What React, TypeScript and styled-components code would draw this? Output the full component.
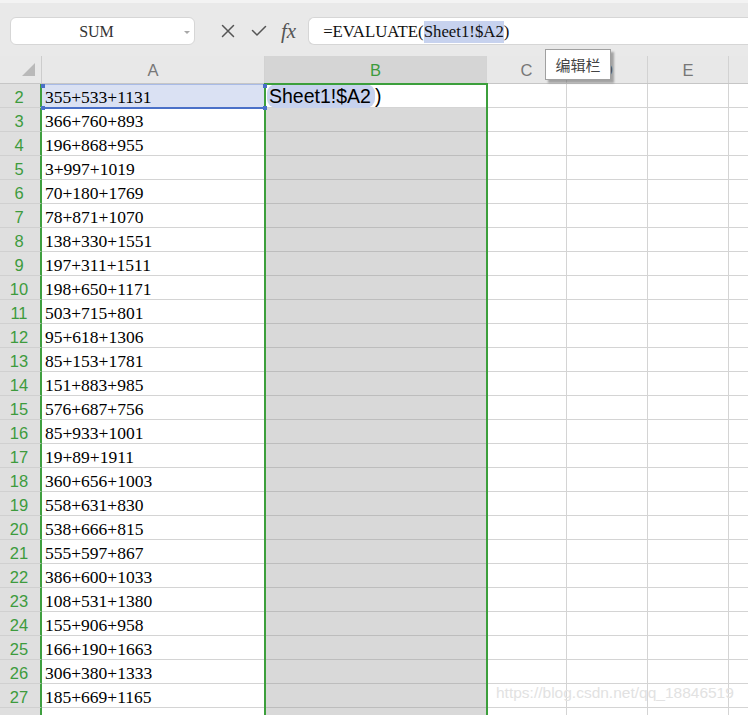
import React from "react";
import styled, { createGlobalStyle } from "styled-components";

const Global = createGlobalStyle`
  html, body { margin: 0; padding: 0; background: #ffffff; }
  body { overflow: hidden; font-family: "Liberation Sans", Arial, sans-serif; }
`;

const Page = styled.div`
  position: relative;
  width: 748px;
  height: 715px;
  overflow: hidden;
  background: #ffffff;
`;

const Toolbar = styled.div`
  height: 56px;
  box-sizing: border-box;
  background: #e9e9e9;
  border-top: 3px solid #f3f3f3;
  display: flex;
  align-items: flex-start;
  padding: 14px 0 0 10px;
`;

const NameBox = styled.div`
  position: relative;
  width: 185px;
  height: 28px;
  box-sizing: border-box;
  background: #ffffff;
  border: 1px solid #d6d6d6;
  border-radius: 6px;
  display: flex;
  align-items: center;
  justify-content: center;
  font-family: "Liberation Serif", "Times New Roman", serif;
  font-size: 16px;
  color: #333;
  padding: 2px 12px 0 0;
`;

const Caret = styled.span`
  position: absolute;
  right: 4px;
  top: 13px;
  width: 0;
  height: 0;
  border-left: 3px solid transparent;
  border-right: 3px solid transparent;
  border-top: 3px solid #a8a8a8;
`;

const IconGroup = styled.div`
  display: flex;
  align-items: center;
  height: 28px;
  margin-left: 26px;
  color: #555;
`;

const IconSlot = styled.span<{ $ml: number }>`
  display: flex;
  align-items: center;
  margin-left: ${(p) => p.$ml}px;
`;

const Fx = styled.span`
  font-family: "Liberation Serif", "Times New Roman", serif;
  font-style: italic;
  font-size: 21px;
  color: #555;
  line-height: 28px;
  margin-left: 14px;
`;

const FormulaBox = styled.div`
  flex: 1;
  margin-left: 12px;
  height: 28px;
  box-sizing: border-box;
  background: #ffffff;
  border: 1px solid #d6d6d6;
  border-right: none;
  border-radius: 6px 0 0 6px;
  display: flex;
  align-items: center;
  padding: 2px 0 0 14px;
  font-family: "Liberation Serif", "Times New Roman", serif;
  font-size: 16.8px;
  color: #111;
  white-space: nowrap;
`;

const RefMark = styled.span<{ $big?: boolean }>`
  background: #c7d2ee;
  border-radius: ${(p) => (p.$big ? "9px" : "0")};
  padding: ${(p) => (p.$big ? "1px 4px 1px 2px" : "1px 0")};
`;

const Sheet = styled.div`
  display: flex;
  flex-direction: column;
`;

const HeaderRow = styled.div`
  display: flex;
  height: 28px;
  box-sizing: border-box;
  background: #e8e8e8;
  border-bottom: 1px solid #c6c6c6;
`;

const Corner = styled.div`
  position: relative;
  width: 42px;
  flex: none;
  box-sizing: border-box;
  border-right: 1px solid #cccccc;
`;

const CornerTri = styled.span`
  position: absolute;
  left: 22px;
  top: 7px;
  width: 0;
  height: 0;
  border-left: 13px solid transparent;
  border-bottom: 13px solid #b9b9b9;
`;

const ColHead = styled.div<{ $w: number; $sel?: boolean }>`
  width: ${(p) => p.$w}px;
  flex: none;
  box-sizing: border-box;
  border-right: 1px solid ${(p) => (p.$sel ? "#d4d4d4" : "#d2d2d2")};
  background: ${(p) => (p.$sel ? "#d5d5d5" : "transparent")};
  color: ${(p) => (p.$sel ? "#3d9b3d" : "#777777")};
  font-size: 16.5px;
  display: flex;
  align-items: center;
  justify-content: center;
  padding-top: 2px;
`;

const Row = styled.div`
  display: flex;
  height: 24px;
`;

const RowNum = styled.div`
  width: 42px;
  flex: none;
  box-sizing: border-box;
  background: #dfdfdf;
  border-right: 2px solid #3f9f3f;
  border-bottom: 1px solid #d0d0d0;
  color: #3d9b3d;
  font-size: 16.5px;
  display: flex;
  align-items: center;
  justify-content: center;
  padding: 3px 2px 0 0;
`;

const Cell = styled.div<{ $w: number; $kind?: "sel" | "active" | "ref" }>`
  width: ${(p) => p.$w}px;
  flex: none;
  box-sizing: border-box;
  border-right: 1px solid #d4d4d4;
  border-bottom: 1px solid
    ${(p) => (p.$kind === "sel" ? "#bdbdbd" : "#d4d4d4")};
  background: ${(p) =>
    p.$kind === "sel" ? "#d9d9d9" : p.$kind === "ref" ? "#dae1f3" : "#ffffff"};
  font-family: "Liberation Serif", "Times New Roman", serif;
  font-size: 17.5px;
  color: #000;
  display: flex;
  align-items: center;
  padding: 3px 0 0 3px;
  white-space: nowrap;
  overflow: visible;
`;

const ActiveText = styled.span`
  font-family: "Liberation Sans", Arial, sans-serif;
  font-size: 19.5px;
  color: #000;
  margin: -1px 0 0 -1px;
`;

const ColumnSelection = styled.div`
  position: absolute;
  left: 264px;
  top: 83px;
  width: 224px;
  height: 640px;
  box-sizing: border-box;
  border: 2px solid #3c9f3c;
  border-bottom: none;
  pointer-events: none;
`;

const RefBox = styled.div`
  position: absolute;
  left: 42px;
  top: 84px;
  width: 223px;
  height: 25px;
  box-sizing: border-box;
  border-top: 1px solid #a9bbe6;
  border-bottom: 2px solid #4a70c8;
  pointer-events: none;
`;

const Handle = styled.span<{ $x: "l" | "r"; $y: "t" | "b" }>`
  position: absolute;
  width: 4px;
  height: 4px;
  background: #4a70c8;
  ${(p) => (p.$x === "l" ? "left: -1px;" : "right: -2px;")}
  ${(p) => (p.$y === "t" ? "top: -1px;" : "bottom: -3px;")}
`;

const Tooltip = styled.div`
  position: absolute;
  left: 545px;
  top: 49px;
  width: 66px;
  height: 31px;
  box-sizing: border-box;
  background: #ffffff;
  border: 1px solid #a0a0a0;
  box-shadow: 3px 3px 2px rgba(0, 0, 0, 0.3);
  display: flex;
  align-items: center;
  justify-content: center;
  font-family: "Noto Sans CJK SC", "Liberation Sans", sans-serif;
  font-size: 15px;
  color: #444;
`;

const Watermark = styled.div`
  position: absolute;
  left: 496px;
  top: 684px;
  font-family: "Liberation Sans", Arial, sans-serif;
  font-size: 15.5px;
  color: #e2e2e2;
  white-space: nowrap;
  pointer-events: none;
`;

const cols = [
  { key: "A", w: 223 },
  { key: "B", w: 222 },
  { key: "C", w: 80 },
  { key: "D", w: 81 },
  { key: "E", w: 81 },
  { key: "F", w: 81 },
];

const data = [
  "355+533+1131",
  "366+760+893",
  "196+868+955",
  "3+997+1019",
  "70+180+1769",
  "78+871+1070",
  "138+330+1551",
  "197+311+1511",
  "198+650+1171",
  "503+715+801",
  "95+618+1306",
  "85+153+1781",
  "151+883+985",
  "576+687+756",
  "85+933+1001",
  "19+89+1911",
  "360+656+1003",
  "558+631+830",
  "538+666+815",
  "555+597+867",
  "386+600+1033",
  "108+531+1380",
  "155+906+958",
  "166+190+1663",
  "306+380+1333",
  "185+669+1165",
  "",
];

const CloseIcon = () => (
  <svg width="14" height="14" viewBox="0 0 14 14" fill="none">
    <path d="M1.5 1.5 L12.5 12.5 M12.5 1.5 L1.5 12.5" stroke="#555" strokeWidth="1.5" strokeLinecap="round" />
  </svg>
);

const CheckIcon = () => (
  <svg width="16" height="12" viewBox="0 0 16 12" fill="none">
    <path d="M1.5 5.5 L6 10 L14.5 1.5" stroke="#555" strokeWidth="1.5" strokeLinecap="round" strokeLinejoin="round" />
  </svg>
);

export default function App() {
  return (
    <Page>
      <Global />
      <Toolbar>
        <NameBox>
          SUM
          <Caret />
        </NameBox>
        <IconGroup>
          <IconSlot $ml={0}>
            <CloseIcon />
          </IconSlot>
          <IconSlot $ml={16}>
            <CheckIcon />
          </IconSlot>
          <Fx>fx</Fx>
        </IconGroup>
        <FormulaBox>
          =EVALUATE(<RefMark>Sheet1!$A2</RefMark>)
        </FormulaBox>
      </Toolbar>
      <Sheet>
        <HeaderRow>
          <Corner>
            <CornerTri />
          </Corner>
          {cols.map((c) => (
            <ColHead key={c.key} $w={c.w} $sel={c.key === "B"}>
              {c.key === "F" ? "" : c.key}
            </ColHead>
          ))}
        </HeaderRow>
        {data.map((v, i) => {
          const r = i + 2;
          return (
            <Row key={r}>
              <RowNum>{r}</RowNum>
              {cols.map((c) => {
                if (c.key === "A")
                  return (
                    <Cell key={c.key} $w={c.w} $kind={r === 2 ? "ref" : undefined}>
                      {v}
                    </Cell>
                  );
                if (c.key === "B")
                  return (
                    <Cell key={c.key} $w={c.w} $kind={r === 2 ? "active" : "sel"}>
                      {r === 2 ? (
                        <ActiveText>
                          <RefMark $big>Sheet1!$A2</RefMark>)
                        </ActiveText>
                      ) : null}
                    </Cell>
                  );
                return <Cell key={c.key} $w={c.w} />;
              })}
            </Row>
          );
        })}
      </Sheet>
      <ColumnSelection />
      <RefBox>
        <Handle $x="l" $y="t" />
        <Handle $x="l" $y="b" />
        <Handle $x="r" $y="t" />
        <Handle $x="r" $y="b" />
      </RefBox>
      <Tooltip>编辑栏</Tooltip>
      <Watermark>https://blog.csdn.net/qq_18846519</Watermark>
    </Page>
  );
}
